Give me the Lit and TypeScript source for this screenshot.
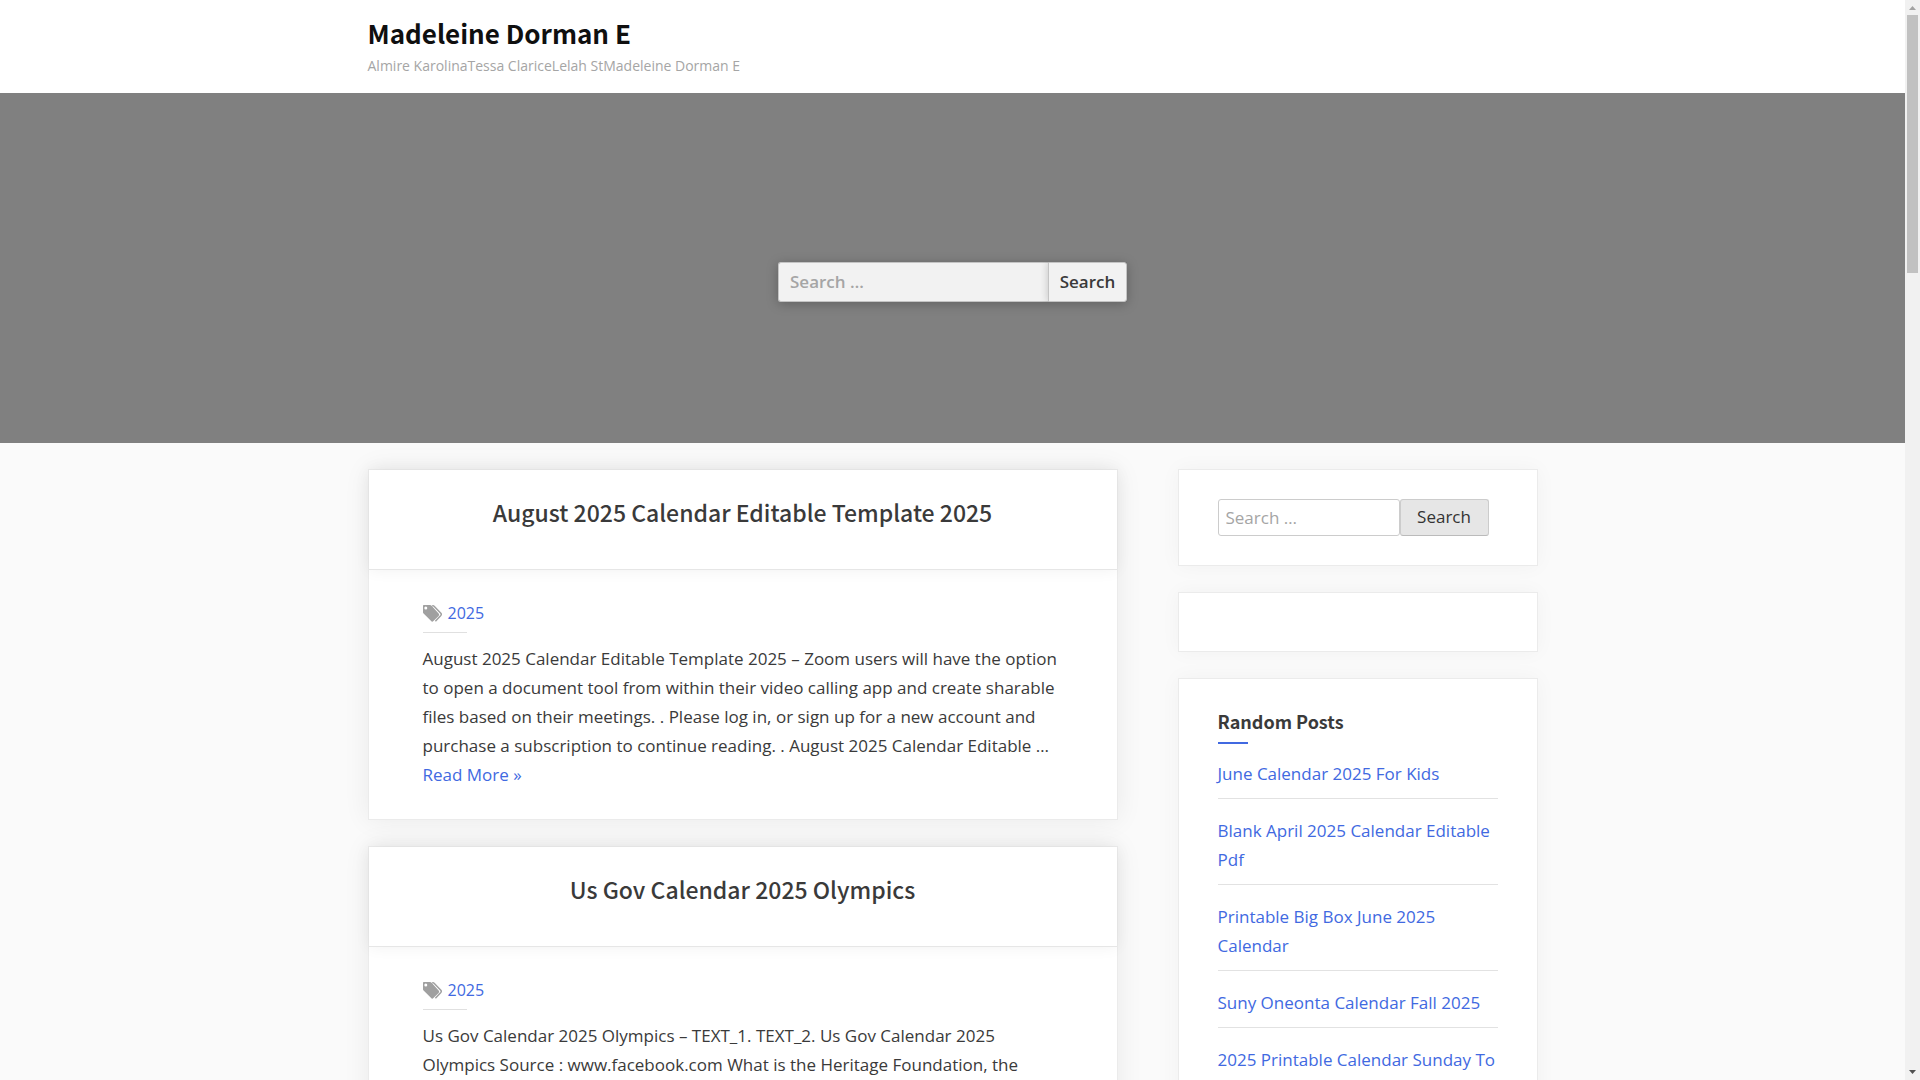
import { LitElement, html, css, svg } from "lit";
import { customElement, property } from "lit/decorators.js";

interface Post {
  title: string;
  tag: string;
  excerpt: string;
  more: boolean;
}

const posts: Post[] = [
  {
    title: "August 2025 Calendar Editable Template 2025",
    tag: "2025",
    excerpt:
      "August 2025 Calendar Editable Template 2025 – Zoom users will have the option to open a document tool from within their video calling app and create sharable files based on their meetings. . Please log in, or sign up for a new account and purchase a subscription to continue reading. . August 2025 Calendar Editable …",
    more: true,
  },
  {
    title: "Us Gov Calendar 2025 Olympics",
    tag: "2025",
    excerpt:
      "Us Gov Calendar 2025 Olympics – TEXT_1. TEXT_2. Us Gov Calendar 2025 Olympics Source : www.facebook.com What is the Heritage Foundation, the",
    more: false,
  },
];

const randomPosts = [
  "June Calendar 2025 For Kids",
  "Blank April 2025 Calendar Editable Pdf",
  "Printable Big Box June 2025 Calendar",
  "Suny Oneonta Calendar Fall 2025",
  "2025 Printable Calendar Sunday To",
];

const tagsIcon = svg`
  <path d="M0 1V7.2c0 .6.2 1 .6 1.400l7.500 7.500c.7.700 1.600.700 2.300 0l5.200-5.200c.7-.7.7-1.600 0-2.300L8.600.8C8.200.3 7.600 0 7 0H1C.4 0 0 .4 0 1zM2.800 4.600a1.500 1.500 0 1 1 0-3 1.500 1.500 0 0 1 0 3z" fill-rule="evenodd"/>
  <path d="M9.200.8h.9c.4 0 .7.200 1 .5l6.700 7c.6.7.6 1.500 0 2.200l-5.400 5.700" fill="none" stroke="#a0a0a0" stroke-width="1.500"/>`;

@customElement("post-card")
export class PostCard extends LitElement {
  @property({ attribute: false }) post!: Post;

  static styles = css`
    :host {
      display: block;
    }
    .card {
      background: #fff;
      border: 1px solid #ebebeb;
      box-shadow: 0 0 25px rgba(0, 0, 0, 0.07);
    }
    .head {
      padding: 24px 54px 38px;
      text-align: center;
      border-bottom: 1px solid #e6e6e6;
      box-shadow: 0 0 15px rgba(0, 0, 0, 0.06);
    }
    .title {
      margin: 0;
      font: 500 23px/37px "Noto Sans CJK SC", sans-serif;
    }
    .title a {
      color: #3a3a3a;
    }
    a {
      color: #4169e1;
      text-decoration: none;
    }
    .body {
      padding: 29px 54px 30px;
    }
    .meta {
      display: flex;
      align-items: center;
      gap: 6px;
      font-size: 16px;
      line-height: 29px;
    }
    .icon {
      width: 19px;
      height: 17px;
      fill: #a0a0a0;
    }
    .rule {
      width: 44px;
      height: 1px;
      margin: 4px 0 11px;
      background: #e0e0e0;
    }
    .text {
      margin: 0;
    }
    .more {
      display: block;
    }
  `;

  render() {
    const p = this.post;
    return html`<article class="card">
      <header class="head">
        <h2 class="title"><a href="#">${p.title}</a></h2>
      </header>
      <div class="body">
        <div class="meta">
          <svg class="icon" viewBox="0 0 19 17" aria-hidden="true">${tagsIcon}</svg>
          <a href="#">${p.tag}</a>
        </div>
        <div class="rule"></div>
        <p class="text">
          ${p.excerpt} ${p.more ? html`<a class="more" href="#">Read More »</a>` : ""}
        </p>
      </div>
    </article>`;
  }
}

@customElement("app-root")
export class AppRoot extends LitElement {
  static styles = css`
    :host {
      display: flex;
      height: 100vh;
      overflow: hidden;
      background: #fafafa;
      color: #3a3a3a;
      font: 17px/29px "Open Sans", sans-serif;
    }
    * {
      box-sizing: border-box;
    }
    .page {
      flex: 1;
      min-width: 0;
      overflow: hidden;
    }
    .wrap {
      max-width: 1170px;
      margin: 0 auto;
    }
    .site-head {
      background: #fff;
      padding: 14px 0;
    }
    .site-title {
      margin: 0;
      padding-bottom: 2px;
      font: 700 26px/37px "Noto Sans CJK SC", sans-serif;
    }
    .site-title a {
      color: #0f0f0f;
    }
    .tagline {
      margin: 0;
      font-size: 14px;
      line-height: 26px;
      color: #a5a5a5;
    }
    a {
      color: #4169e1;
      text-decoration: none;
    }
    .hero {
      display: flex;
      align-items: center;
      justify-content: center;
      min-height: 350px;
      padding-top: 28px;
      background: #808080;
    }
    input,
    button {
      font: inherit;
      margin: 0;
      outline: none;
    }
    input::placeholder {
      color: #a5a5a5;
      opacity: 1;
    }
    .search {
      display: flex;
    }
    .hero-search {
      height: 40px;
      border-radius: 3px;
      box-shadow: 0 2px 12px rgba(0, 0, 0, 0.25);
      font-weight: 600;
      line-height: 24px;
    }
    .hero-search input {
      width: 270px;
      padding: 0 11px;
      background: #f2f2f2;
      border: 1px solid #c4c4c4;
      border-right: 0;
      border-radius: 3px 0 0 3px;
    }
    .hero-search button {
      width: 79px;
      padding: 0;
      color: #3a3a3a;
      background: #f2f2f2;
      border: 1px solid #c4c4c4;
      border-radius: 0 3px 3px 0;
      box-shadow: 0 0 8px rgba(0, 0, 0, 0.2);
      clip-path: inset(0 0 0 -10px);
    }
    .columns {
      display: grid;
      grid-template-columns: minmax(0, 750fr) minmax(0, 360fr);
      gap: 60px;
      align-items: start;
      padding-top: 26px;
    }
    .stack {
      display: grid;
      gap: 26px;
    }
    .widget {
      background: #fff;
      border: 1px solid #ebebeb;
      padding: 29px 39px;
      box-shadow: 0 0 20px rgba(0, 0, 0, 0.04);
    }
    .side-search {
      height: 37px;
    }
    .side-search input {
      width: 182px;
      padding: 0 7px;
      background: #fff;
      border: 1px solid #ccc;
      border-radius: 3px;
    }
    .side-search button {
      width: 89px;
      padding: 0 0 2px;
      line-height: 24px;
      color: #333;
      background: #e6e6e6;
      border: 1px solid #ccc;
      border-bottom-color: #bbb;
      border-radius: 3px;
    }
    .widget-title {
      margin: 0;
      font: 700 18px/27px "Noto Sans CJK SC", sans-serif;
    }
    .accent {
      width: 30px;
      height: 2px;
      margin: 7px 0 15px;
      background: #4169e1;
    }
    .list {
      display: grid;
      gap: 17px;
      list-style: none;
      margin: 0;
      padding: 0;
    }
    .list li {
      padding-bottom: 10px;
      border-bottom: 1px solid #e2e2e2;
    }
    .scrollbar {
      display: flex;
      flex-direction: column;
      align-items: center;
      flex: none;
      width: 15px;
      background: #f1f1f1;
    }
    .arrow {
      width: 15px;
      height: 15px;
      flex: none;
    }
    .track {
      flex: 1;
      width: 11px;
    }
    .thumb {
      height: 258px;
      background: #c1c1c1;
    }
  `;

  render() {
    return html`
      <div class="page">
        <header class="site-head">
          <div class="wrap">
            <h1 class="site-title"><a href="#">Madeleine Dorman E</a></h1>
            <p class="tagline">Almire KarolinaTessa ClariceLelah StMadeleine Dorman E</p>
          </div>
        </header>
        <section class="hero">
          <form class="search hero-search" role="search">
            <input type="text" placeholder="Search …" aria-label="Search for" />
            <button type="button">Search</button>
          </form>
        </section>
        <div class="wrap columns">
          <main class="stack">
            ${posts.map((p) => html`<post-card .post=${p}></post-card>`)}
          </main>
          <aside class="stack">
            <section class="widget">
              <form class="search side-search" role="search">
                <input type="text" placeholder="Search …" aria-label="Search for" />
                <button type="button">Search</button>
              </form>
            </section>
            <section class="widget"></section>
            <section class="widget">
              <h2 class="widget-title">Random Posts</h2>
              <div class="accent"></div>
              <ul class="list">
                ${randomPosts.map((t) => html`<li><a href="#">${t}</a></li>`)}
              </ul>
            </section>
          </aside>
        </div>
      </div>
      <div class="scrollbar" aria-hidden="true">
        <svg class="arrow" viewBox="0 0 15 15"><path d="M4 10h7L7.5 6z" fill="#a3a3a3" /></svg>
        <div class="track"><div class="thumb"></div></div>
        <svg class="arrow" viewBox="0 0 15 15"><path d="M4 5h7L7.5 9z" fill="#505050" /></svg>
      </div>
    `;
  }
}
